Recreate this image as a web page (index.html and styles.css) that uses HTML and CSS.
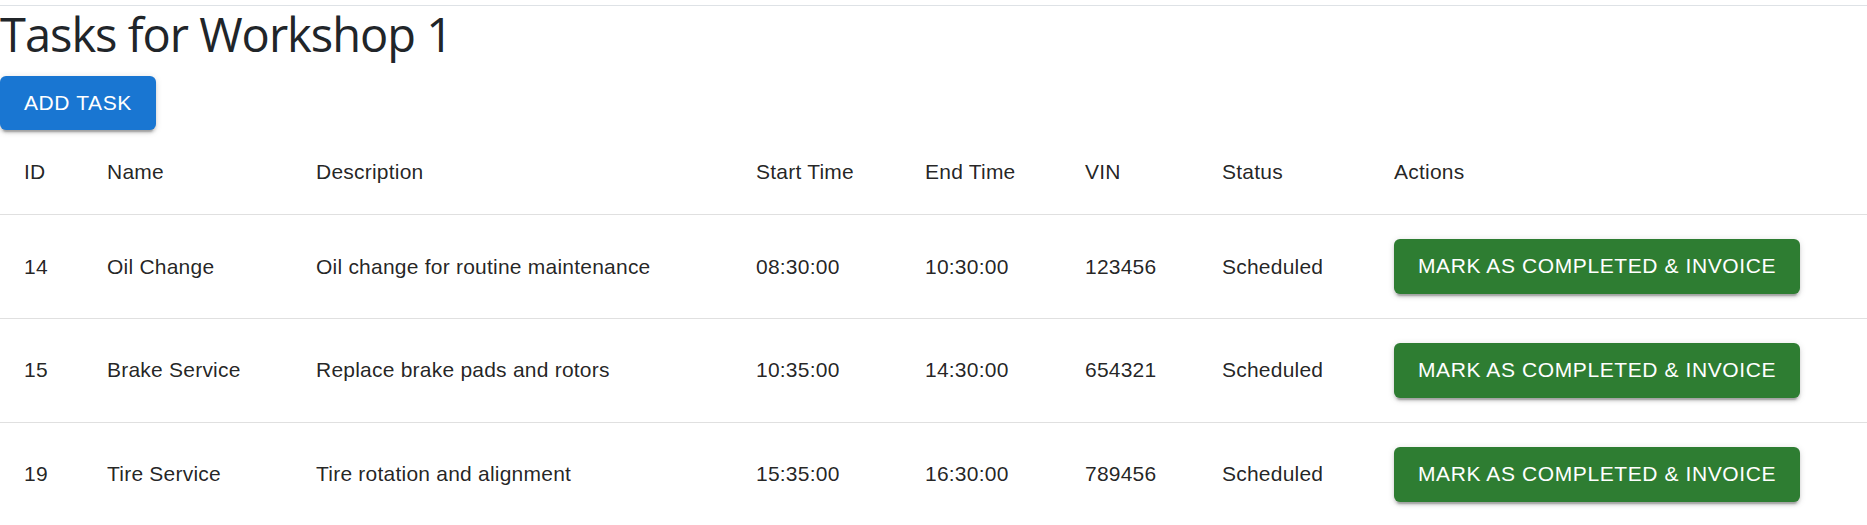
FILE: index.html
```html
<!DOCTYPE html>
<html lang="en">
<head>
<meta charset="utf-8">
<title>Tasks for Workshop 1</title>
<link rel="stylesheet" href="styles.css">
</head>
<body>
<div class="topbar"></div>
<main class="page">
  <h2 class="title">Tasks for Workshop 1</h2>
  <button class="btn btn-primary" type="button">Add Task</button>
  <table class="tasks">
    <colgroup>
      <col class="c-id"><col class="c-name"><col class="c-desc"><col class="c-start"><col class="c-end"><col class="c-vin"><col class="c-status"><col class="c-actions">
    </colgroup>
    <thead>
      <tr><th>ID</th><th>Name</th><th>Description</th><th>Start Time</th><th>End Time</th><th>VIN</th><th>Status</th><th>Actions</th></tr>
    </thead>
    <tbody>
      <tr><td>14</td><td>Oil Change</td><td>Oil change for routine maintenance</td><td>08:30:00</td><td>10:30:00</td><td>123456</td><td>Scheduled</td><td><button class="btn btn-success" type="button">Mark as Completed &amp; Invoice</button></td></tr>
      <tr><td>15</td><td>Brake Service</td><td>Replace brake pads and rotors</td><td>10:35:00</td><td>14:30:00</td><td>654321</td><td>Scheduled</td><td><button class="btn btn-success" type="button">Mark as Completed &amp; Invoice</button></td></tr>
      <tr><td>19</td><td>Tire Service</td><td>Tire rotation and alignment</td><td>15:35:00</td><td>16:30:00</td><td>789456</td><td>Scheduled</td><td><button class="btn btn-success" type="button">Mark as Completed &amp; Invoice</button></td></tr>
    </tbody>
  </table>
</main>
</body>
</html>
```

FILE: styles.css
```css
html, body {
  margin: 0;
  padding: 0;
  background: #ffffff;
}

body {
  font-family: "Liberation Sans", Arial, sans-serif;
  color: rgba(0, 0, 0, 0.87);
}

.topbar {
  height: 5px;
  border-bottom: 1px solid #dee2e6;
}

.page {
  display: flex;
  flex-direction: column;
  align-items: flex-start;
}

.title {
  margin: 0 0 12px;
  font-family: "Open Sans", "Noto Sans", sans-serif;
  font-weight: 400;
  font-size: 47px;
  letter-spacing: -1px;
  line-height: 57.6px;
  color: #212529;
}

.btn {
  font-family: "Liberation Sans", Arial, sans-serif;
  font-size: 21px;
  font-weight: 500;
  letter-spacing: 0.6px;
  line-height: 1.75;
  text-transform: uppercase;
  color: #ffffff;
  border: 0;
  border-radius: 6px;
  padding: 9px 24px;
  cursor: pointer;
  box-shadow: 0 4.5px 1.5px -3px rgba(0, 0, 0, 0.2),
              0 3px 3px 0 rgba(0, 0, 0, 0.14),
              0 1.5px 7.5px 0 rgba(0, 0, 0, 0.12);
}

.btn-primary {
  background: #1976d2;
}

.btn-success {
  background: #2e7d32;
}

.tasks {
  width: 100%;
  border-collapse: collapse;
  table-layout: fixed;
  font-size: 21px;
  letter-spacing: 0.225px;
}

.c-id { width: 83px; }
.c-name { width: 209px; }
.c-desc { width: 440px; }
.c-start { width: 169px; }
.c-end { width: 160px; }
.c-vin { width: 137px; }
.c-status { width: 172px; }
.c-actions { width: auto; }

.tasks th,
.tasks td {
  padding: 24px;
  text-align: left;
  border-bottom: 1px solid #e0e0e0;
  vertical-align: middle;
  white-space: nowrap;
}

.tasks th {
  font-weight: 500;
  line-height: 36px;
}

.tasks td {
  font-weight: 400;
  line-height: 30px;
}

.tasks td .btn {
  letter-spacing: 0.6px;
}
```
